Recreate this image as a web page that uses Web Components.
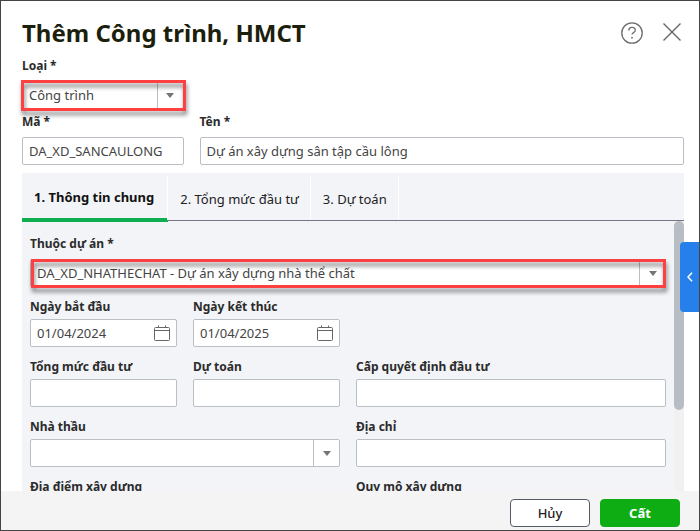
<!DOCTYPE html>
<html lang="vi">
<head>
<meta charset="utf-8">
<meta name="viewport" content="width=device-width, initial-scale=1">
<title>Thêm Công trình, HMCT</title>
<style>
  body { margin: 0; font: 13px/18px "Noto Sans", sans-serif; color: #222; background: #fff; }
  .pair { display: grid; grid-template-columns: 1fr 3fr; column-gap: 16px; row-gap: 4px; }
  .grid { display: grid; grid-template-columns: repeat(4, 1fr); gap: 11px 16px; }
  .full { grid-column: 1 / -1; }
  .wide { grid-column: span 2; }
  .first { grid-column: 1; }
</style>
</head>
<body>
<app-dialog heading="Thêm Công trình, HMCT">
  <div class="pair">
    <combo-field class="first" label="Loại *" value="Công trình" required marked style="--mark-inset: -1px -2px -2px -1px"></combo-field>
    <text-field class="first" label="Mã *" value="DA_XD_SANCAULONG" required></text-field>
    <text-field label="Tên *" value="Dự án xây dựng sân tập cầu lông" required></text-field>
  </div>
  <tab-panel tabs="1. Thông tin chung|2. Tổng mức đầu tư|3. Dự toán">
    <div class="grid">
      <combo-field class="full" label="Thuộc dự án *" value="DA_XD_NHATHECHAT - Dự án xây dựng nhà thể chất" required marked style="--mark-inset: 0 0 -1px 1px"></combo-field>
      <date-field class="first" label="Ngày bắt đầu" value="01/04/2024"></date-field>
      <date-field label="Ngày kết thúc" value="01/04/2025"></date-field>
      <text-field class="first" label="Tổng mức đầu tư"></text-field>
      <text-field label="Dự toán"></text-field>
      <text-field class="wide" label="Cấp quyết định đầu tư"></text-field>
      <combo-field class="wide" label="Nhà thầu"></combo-field>
      <text-field class="wide" label="Địa chỉ"></text-field>
      <text-field class="wide" label="Địa điểm xây dựng"></text-field>
      <text-field class="wide" label="Quy mô xây dựng"></text-field>
    </div>
  </tab-panel>
  <action-button slot="actions">Hủy</action-button>
  <action-button slot="actions" primary>Cất</action-button>
  <side-handle slot="handle"></side-handle>
</app-dialog>

<script>
const fieldStyle = `
  :host { display: flex; flex-direction: column; gap: 3px; min-width: 0; }
  :host([required]) { gap: 6px; }
  label { font-size: 12px; line-height: 18px; font-weight: 700; color: #2b2b2b; white-space: nowrap; }
  .box { position: relative; display: flex; box-sizing: border-box; height: 28px;
         border: 1px solid #babec5; border-radius: 2px; background: #fff; }
  input, select { appearance: none; flex: 1; min-width: 0; width: 100%; margin: 0; padding: 0 6px;
         border: 0; outline: 0; background: none; font: 13px/18px "Noto Sans", sans-serif; color: #444; }
  .box:focus-within { border-color: #2680eb; }
  :host([marked]) .box::after { content: ""; position: absolute; inset: var(--mark-inset, 0);
         margin: -1px; border: 3px solid #ff4040; pointer-events: none;
         filter: drop-shadow(1px 4px 2px rgba(0,0,0,.5)); }
`;

class FieldBase extends HTMLElement {
  connectedCallback() {
    if (this.shadowRoot) return;
    const root = this.attachShadow({ mode: "open" });
    root.innerHTML = `<style>${fieldStyle}${this.extraStyle()}</style>
      <label for="control"></label><div class="box">${this.control()}</div>`;
    root.querySelector("label").textContent = this.getAttribute("label");
    this.fill(root.querySelector("#control"), this.getAttribute("value") || "");
  }
  extraStyle() { return ""; }
  control() { return `<input id="control" type="text">`; }
  fill(control, value) { control.value = value; }
}

class TextField extends FieldBase {}

class DateField extends FieldBase {
  extraStyle() {
    return `button { flex: none; width: 28px; padding: 0; border: 0; background: none; display: grid; place-items: center; cursor: pointer; }
      svg { display: block; }`;
  }
  control() {
    return `<input id="control" type="text">
      <button type="button" aria-label="Chọn ngày"><svg width="16" height="17" viewBox="0 0 16 17" fill="none" stroke="#666">
        <rect x=".5" y="2.5" width="15" height="13" rx="1"/><path d="M.5 5.5h15M4.5 .5v2M11.5 .5v2"/></svg></button>`;
  }
}

class ComboField extends FieldBase {
  extraStyle() {
    return `select { padding-right: 32px; cursor: pointer; }
      .arrow { position: absolute; inset: 0 0 0 auto; width: 25px; border-left: 1px solid #babec5;
        display: grid; place-items: center; pointer-events: none; }`;
  }
  control() {
    return `<select id="control"></select><span class="arrow"><svg width="8" height="5" viewBox="0 0 8 5"><path d="M0 0h8L4 5z" fill="#757575"/></svg></span>`;
  }
  fill(select, value) { select.add(new Option(value, value, true, true)); }
}

class TabPanel extends HTMLElement {
  connectedCallback() {
    if (this.shadowRoot) return;
    const root = this.attachShadow({ mode: "open" });
    root.innerHTML = `<style>
      :host { display: flex; flex-direction: column; flex: 1; min-height: 0; background: #f3f4f8; }
      nav { display: flex; align-items: stretch; height: 48px; flex: none; box-sizing: border-box;
            box-shadow: inset 0 -1px #717789; }
      button { position: relative; padding: 4px 12px 0; border: 0; background: none; color: #222;
            font: 13px/18px "Noto Sans", sans-serif; white-space: nowrap; cursor: pointer; }
      button::after { content: ""; position: absolute; right: 0; top: 4px; bottom: 1px; width: 1px; background: #fff; }
      button[aria-selected="true"] { padding: 0 14px 0 12px; font-weight: 700; color: #111; }
      button[aria-selected="true"]::before { content: ""; position: absolute; left: 0; right: 0; bottom: -1px; height: 4px; background: #0fae50; }
      .view { display: flex; flex: 1; min-height: 0; }
      .scroll { flex: 1; min-width: 0; overflow-y: auto; scrollbar-width: none; padding: 14px 8px; }
      .rail { flex: none; width: 10px; background: #f1f1f1; }
      .thumb { height: 70%; border-radius: 5px; background: #b8bcc3; }
    </style>
    <nav role="tablist"></nav>
    <div class="view"><div class="scroll" role="tabpanel"><slot></slot></div>
      <div class="rail"><div class="thumb"></div></div></div>`;
    const nav = root.querySelector("nav");
    this.getAttribute("tabs").split("|").forEach((name, i) => {
      const b = document.createElement("button");
      b.type = "button";
      b.setAttribute("role", "tab");
      b.setAttribute("aria-selected", i === 0);
      b.textContent = name;
      b.addEventListener("click", () => nav.querySelectorAll("button").forEach(o => o.setAttribute("aria-selected", o === b)));
      nav.append(b);
    });
    const view = root.querySelector(".scroll"), thumb = root.querySelector(".thumb");
    view.addEventListener("scroll", () => {
      const range = view.scrollHeight - view.clientHeight;
      const travel = thumb.parentElement.clientHeight - thumb.clientHeight;
      thumb.style.marginTop = Math.round(view.scrollTop / range * travel) + "px";
    });
  }
}

class ActionButton extends HTMLElement {
  connectedCallback() {
    if (this.shadowRoot) return;
    this.attachShadow({ mode: "open" }).innerHTML = `<style>
      :host { display: block; }
      button { display: block; box-sizing: border-box; min-width: 80px; height: 28px; padding: 0 16px; border: 1px solid #555b66;
        border-radius: 4px; background: #fff; color: #222; font: 500 13px/18px "Noto Sans", sans-serif; cursor: pointer; }
      :host([primary]) button { border-color: #0fad14; background: #0fad14; color: #fff; font-weight: 700; }
    </style><button type="button"><slot></slot></button>`;
  }
}

class SideHandle extends HTMLElement {
  connectedCallback() {
    if (this.shadowRoot) return;
    this.attachShadow({ mode: "open" }).innerHTML = `<style>
      :host { position: absolute; right: 0; top: 241px; }
      button { display: grid; place-items: center; width: 19px; height: 70px; padding: 0; border: 0;
        border-radius: 4px 0 0 4px; background: #2680eb; cursor: pointer; }
    </style><button type="button" aria-label="Mở bảng bên"><svg width="6" height="10" viewBox="0 0 6 10" fill="none" stroke="#fff" stroke-width="1.6"><path d="M5 .8 1 5l4 4.2"/></svg></button>`;
  }
}

class AppDialog extends HTMLElement {
  connectedCallback() {
    if (this.shadowRoot) return;
    const root = this.attachShadow({ mode: "open" });
    root.innerHTML = `<style>
      :host { position: relative; display: flex; flex-direction: column; box-sizing: border-box; height: 100vh;
        border: 1px solid #444; background: #fff; }
      header { display: flex; align-items: center; gap: 19px; padding: 16px 17px 8px 21px; flex: none; }
      h1 { flex: 1; margin: 0; font-size: 24px; line-height: 32px; font-weight: 700; color: #1c1f0c; }
      header button { padding: 0; border: 0; background: none; cursor: pointer; }
      svg { display: block; }
      main { flex: 1; min-height: 0; display: flex; flex-direction: column; gap: 8px; padding: 0 15px 0 21px; }
      footer { flex: none; display: flex; justify-content: flex-end; gap: 10px; padding: 8px 19px 3px; background: #f4f4f4; }
    </style>
    <header><h1></h1>
      <button type="button" aria-label="Trợ giúp"><svg width="22" height="22" viewBox="0 0 22 22" fill="none" stroke="#6b6b6b" stroke-width="1.3">
        <circle cx="11" cy="11" r="10.2"/><path d="M7.8 8.4C7.8 6.5 9.1 5.4 11 5.4s3.300 1.100 3.300 2.900c0 2.400-3.300 2.200-3.300 4.200"/><path d="M11 15v1.600" stroke-width="1.600"/></svg></button>
      <button type="button" aria-label="Đóng"><svg width="20" height="22" viewBox="0 0 20 22" fill="none" stroke="#666" stroke-width="1.4"><path d="m1.500 1.500 17 17m0-17-17 17"/></svg></button>
    </header>
    <main><slot></slot></main>
    <footer><slot name="actions"></slot></footer>
    <slot name="handle"></slot>`;
    root.querySelector("h1").textContent = this.getAttribute("heading");
  }
}

customElements.define("text-field", TextField);
customElements.define("date-field", DateField);
customElements.define("combo-field", ComboField);
customElements.define("tab-panel", TabPanel);
customElements.define("action-button", ActionButton);
customElements.define("side-handle", SideHandle);
customElements.define("app-dialog", AppDialog);
</script>
</body>
</html>
